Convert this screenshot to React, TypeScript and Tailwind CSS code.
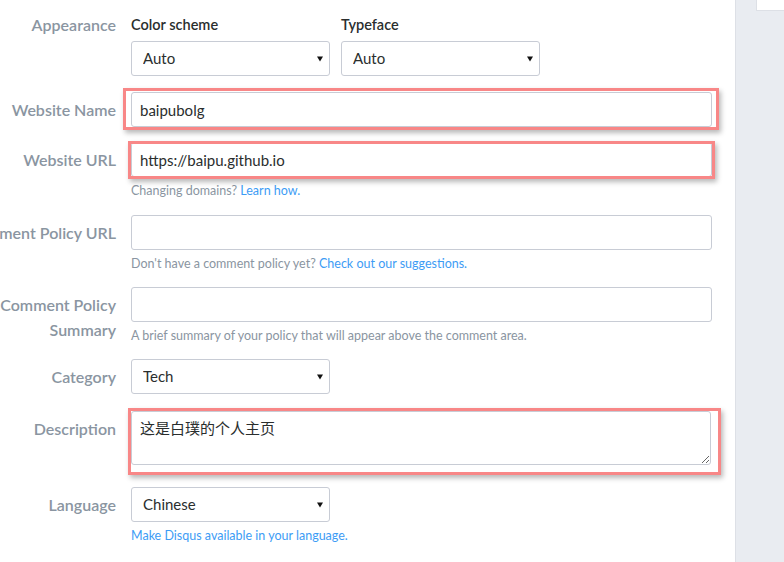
import React from 'react';

const labelBase =
  'w-[175px] shrink-0 pr-[15px] text-right text-[16px] font-semibold text-[#8a95a1]';
const inputCls =
  'block h-[35px] w-full rounded-[3px] border border-[#c8ccd5] bg-white px-[8px] text-[15px] text-[#2a2e2e] outline-none';
const helpCls = 'mt-[7px] text-[12.5px] leading-[14px]';
const linkCls = 'text-[#3d9cf5]';
const subLabelCls = 'mb-[5px] text-[14.5px] leading-[22px] font-semibold text-[#2a2e2e]';

function Highlight({ className }: { className: string }) {
  return (
    <div
      className={`pointer-events-none absolute border-[3px] border-[#f88787] shadow-[2px_3px_5px_rgba(0,0,0,0.28)] ${className}`}
    />
  );
}

function Select({ value, width }: { value: string; width: string }) {
  return (
    <div className={`relative ${width}`}>
      <select
        defaultValue={value}
        className="block h-[35px] w-full appearance-none rounded-[3px] border border-[#c8ccd5] bg-white pl-[11px] text-[15px] text-[#2a2e2e] outline-none"
      >
        <option>{value}</option>
      </select>
      <svg
        className="pointer-events-none absolute right-[7px] top-[15px]"
        width="6"
        height="6"
        viewBox="0 0 6 6"
      >
        <path d="M0 0.5h6L3 5.5z" fill="#111" />
      </svg>
    </div>
  );
}

function Row({
  label,
  children,
  className = ''
}: {
  label: string;
  children: React.ReactNode;
  className?: string;
}) {
  return (
    <div className={`flex ${className}`}>
      <div className={`${labelBase} pt-[5px] leading-[25px]`}>{label}</div>
      <div className="w-[581px]">{children}</div>
    </div>
  );
}

export default function App() {
  return (
    <div
      className="flex h-[562px] w-[784px] overflow-hidden bg-white"
      style={{ fontFamily: 'Lato, "Noto Sans CJK SC", sans-serif' }}
    >
      <main className="w-[735px] shrink-0 overflow-hidden">
        <form className="-ml-[44px] pt-[14px]">
          {/* Appearance */}
          <div className="flex">
            <div className={`${labelBase} leading-[22px]`}>Appearance</div>
            <div className="flex gap-[11px]">
              <div>
                <div className={subLabelCls}>Color scheme</div>
                <Select value="Auto" width="w-[199px]" />
              </div>
              <div>
                <div className={subLabelCls}>Typeface</div>
                <Select value="Auto" width="w-[199px]" />
              </div>
            </div>
          </div>

          <Row label="Website Name" className="mt-[16px]">
            <div className="relative">
              <input className={inputCls} defaultValue="baipubolg" />
              <Highlight className="-left-[8px] -right-[7px] -top-[4px] -bottom-[3px]" />
            </div>
          </Row>

          <Row label="Website URL" className="mt-[15px]">
            <div className="relative">
              <input className={inputCls} defaultValue="https://baipu.github.io" />
              <Highlight className="-left-[3px] -right-[3px] -top-[1px] -bottom-[2px]" />
            </div>
            <p className={`${helpCls} text-[#8a95a1]`}>
              Changing domains? <a className={linkCls}>Learn how.</a>
            </p>
          </Row>

          <Row label="Comment Policy URL" className="mt-[17px]">
            <input className={inputCls} />
            <p className={`${helpCls} text-[#8a95a1]`}>
              Don't have a comment policy yet?{' '}
              <a className={linkCls}>Check out our suggestions.</a>
            </p>
          </Row>

          <Row label="Comment Policy Summary" className="mt-[16px]">
            <input className={inputCls} />
            <p className={`${helpCls} text-[#8a95a1]`}>
              A brief summary of your policy that will appear above the comment area.
            </p>
          </Row>

          <Row label="Category" className="mt-[16px]">
            <Select value="Tech" width="w-[199px]" />
          </Row>

          <Row label="Description" className="mt-[17px]">
            <div className="relative w-[580px]">
              <textarea
                className="block h-[54px] w-full rounded-[3px] border border-[#c8ccd5] bg-white px-[8px] py-[7px] text-[15px] leading-[18px] text-[#2a2e2e] outline-none"
                defaultValue="这是白璞的个人主页"
              />
              <Highlight className="-left-[3px] -right-[10px] -top-[3px] -bottom-[10px]" />
            </div>
          </Row>

          <Row label="Language" className="mt-[22px]">
            <Select value="Chinese" width="w-[199px]" />
            <p className={`${helpCls} text-[#3d9cf5]`}>
              Make Disqus available in your language.
            </p>
          </Row>
        </form>
      </main>
      <aside className="flex-1 border-l border-[#dde0e6] bg-[#e9ecf1] pl-[20px]">
        <div className="h-[11px] border-b border-l border-[#dde0e6] bg-white" />
      </aside>
    </div>
  );
}
